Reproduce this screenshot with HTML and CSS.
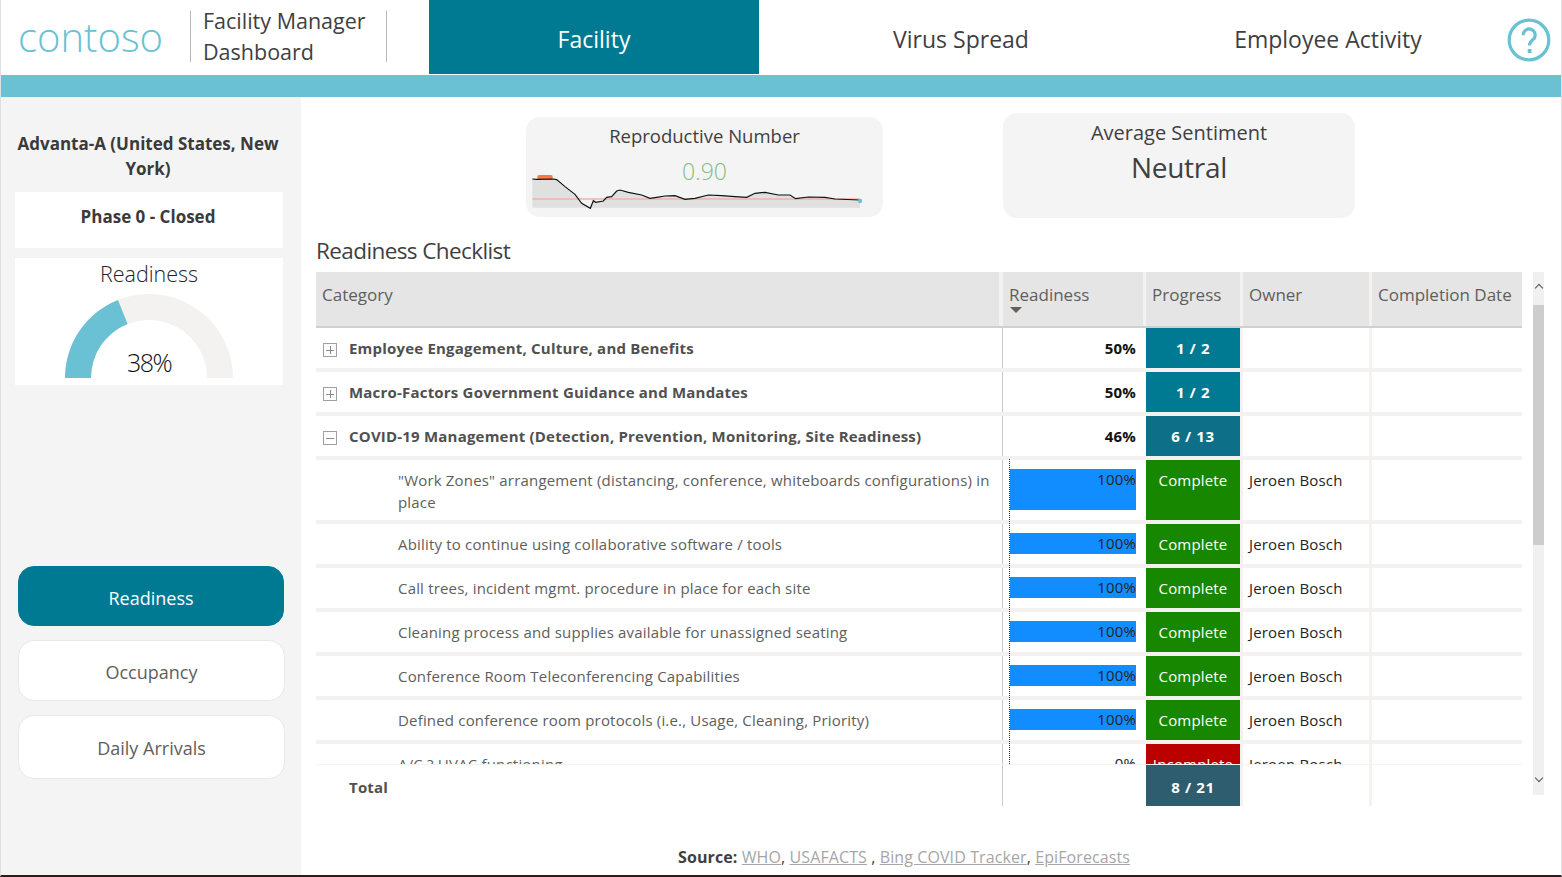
FILE: index.html
```html
<!DOCTYPE html>
<html lang="en">
<head>
    <meta charset="UTF-8">
    <meta name="viewport" content="width=device-width, initial-scale=1.0">
    <title>Facility Manager Dashboard</title>
    <link rel="stylesheet" href="styles.css">
</head>
<body>
    <div class="page">
        <header class="topbar">
            <div class="logo">contoso</div>
            <div class="app-title"><div class="app-title-text">Facility Manager Dashboard</div></div>
            <nav class="tabs">
                <a class="tab active">Facility</a>
                <a class="tab">Virus Spread</a>
                <a class="tab">Employee Activity</a>
            </nav>
            <svg class="help" viewBox="0 0 44 44" width="44" height="44">
                <circle cx="22" cy="22" r="19.8" fill="none" stroke="#6ac1d4" stroke-width="3.2"/>
                <path d="M16.2 17.2a6 6 0 1 1 9.6 4.6c-2.2 1.7-3.3 2.8-3.3 5.7" fill="none" stroke="#6ac1d4" stroke-width="3.2"/>
                <rect x="20.7" y="31" width="3.8" height="4" fill="#6ac1d4"/>
            </svg>
        </header>
        <div class="strip"></div>

        <div class="content">
            <aside class="sidebar">
                <h2 class="site-name">Advanta-A (United States, New York)</h2>
                <div class="phase-card">Phase 0 - Closed</div>
                <div class="gauge-card">
                    <div class="gauge-title">Readiness</div>
                    <svg class="gauge" viewBox="0 0 168 84" width="168" height="84">
                        <path d="M0 84a84 84 0 0 1 168 0h-26a58 58 0 0 0-116 0z" fill="#f3f2f1"/>
                        <path d="M0 84a84 84 0 0 1 53-78l9.6 24a58 58 0 0 0-36.6 54z" fill="#6ac1d4"/>
                        <text x="84" y="78" text-anchor="middle" class="gauge-value">38%</text>
                    </svg>
                </div>
                <div class="side-buttons">
                    <button class="side-btn active">Readiness</button>
                    <button class="side-btn">Occupancy</button>
                    <button class="side-btn tall">Daily Arrivals</button>
                </div>
            </aside>

            <main class="main">
                <div class="kpis">
                    <div class="kpi kpi-repro">
                        <div class="kpi-label">Reproductive Number</div>
                        <div class="kpi-number">0.90</div>
                        <svg class="spark" viewBox="18 0 1002 150" width="334" height="50">
                            <path d="M22 42L35 43L85 42L95 44L120 65L150 88L170 115L196 130L205 107L212 112L235 108L245 97L260 95L275 78L285 75L310 82L350 90L375 100L395 97L420 93L450 92L480 103L510 100L550 90L590 92L630 95L665 97L690 85L720 82L760 90L795 90L812 101L850 96L900 97L930 102L1005 105V128H22Z" fill="#e0e0e0"/>
                            <line x1="22" y1="102" x2="1005" y2="102" stroke="#efb6a2" stroke-width="5"/>
                            <rect x="37" y="30" width="46" height="14" rx="5" fill="#ff7744"/>
                            <path d="M22 42L35 43L85 42L95 44L120 65L150 88L170 115L196 130L205 107L212 112L235 108L245 97L260 95L275 78L285 75L310 82L350 90L375 100L395 97L420 93L450 92L480 103L510 100L550 90L590 92L630 95L665 97L690 85L720 82L760 90L795 90L812 101L850 96L900 97L930 102L1005 105" fill="none" stroke="#111" stroke-width="3.5"/>
                            <circle cx="1005" cy="108" r="6.5" fill="#6ac1d4"/>
                        </svg>
                    </div>
                    <div class="kpi kpi-sentiment">
                        <div class="kpi-label">Average Sentiment</div>
                        <div class="kpi-word">Neutral</div>
                    </div>
                </div>

                <h1 class="section-title">Readiness Checklist</h1>

                <div class="table-wrap">
                    <div class="table">
                        <div class="row head">
                            <div class="cell">Category</div>
                            <div class="cell readiness-head">Readiness<span class="sort-arrow"></span></div>
                            <div class="cell progress-head">Progress</div>
                            <div class="cell">Owner</div>
                            <div class="cell">Completion Date</div>
                        </div>
                        <div class="tbody">
                            <div class="row group">
                                <div class="cell cat"><span class="toggle plus"></span>Employee Engagement, Culture, and Benefits</div>
                                <div class="cell pct">50%</div>
                                <div class="cell progress teal">1 / 2</div>
                                <div class="cell owner"></div>
                                <div class="cell date"></div>
                            </div>
                            <div class="row group">
                                <div class="cell cat"><span class="toggle plus"></span>Macro-Factors Government Guidance and Mandates</div>
                                <div class="cell pct">50%</div>
                                <div class="cell progress teal">1 / 2</div>
                                <div class="cell owner"></div>
                                <div class="cell date"></div>
                            </div>
                            <div class="row group">
                                <div class="cell cat"><span class="toggle minus"></span>COVID-19 Management (Detection, Prevention, Monitoring, Site Readiness)</div>
                                <div class="cell pct">46%</div>
                                <div class="cell progress teal-dark">6 / 13</div>
                                <div class="cell owner"></div>
                                <div class="cell date"></div>
                            </div>
                            <div class="row item two-line">
                                <div class="cell sub">"Work Zones" arrangement (distancing, conference, whiteboards configurations) in place</div>
                                <div class="cell pct"><div class="bar">100%</div></div>
                                <div class="cell progress green">Complete</div>
                                <div class="cell owner">Jeroen Bosch</div>
                                <div class="cell date"></div>
                            </div>
                            <div class="row item">
                                <div class="cell sub">Ability to continue using collaborative software / tools</div>
                                <div class="cell pct"><div class="bar">100%</div></div>
                                <div class="cell progress green">Complete</div>
                                <div class="cell owner">Jeroen Bosch</div>
                                <div class="cell date"></div>
                            </div>
                            <div class="row item">
                                <div class="cell sub">Call trees, incident mgmt. procedure in place for each site</div>
                                <div class="cell pct"><div class="bar">100%</div></div>
                                <div class="cell progress green">Complete</div>
                                <div class="cell owner">Jeroen Bosch</div>
                                <div class="cell date"></div>
                            </div>
                            <div class="row item">
                                <div class="cell sub">Cleaning process and supplies available for unassigned seating</div>
                                <div class="cell pct"><div class="bar">100%</div></div>
                                <div class="cell progress green">Complete</div>
                                <div class="cell owner">Jeroen Bosch</div>
                                <div class="cell date"></div>
                            </div>
                            <div class="row item">
                                <div class="cell sub">Conference Room Teleconferencing Capabilities</div>
                                <div class="cell pct"><div class="bar">100%</div></div>
                                <div class="cell progress green">Complete</div>
                                <div class="cell owner">Jeroen Bosch</div>
                                <div class="cell date"></div>
                            </div>
                            <div class="row item">
                                <div class="cell sub">Defined conference room protocols (i.e., Usage, Cleaning, Priority)</div>
                                <div class="cell pct"><div class="bar">100%</div></div>
                                <div class="cell progress green">Complete</div>
                                <div class="cell owner">Jeroen Bosch</div>
                                <div class="cell date"></div>
                            </div>
                            <div class="row item">
                                <div class="cell sub">A/C ? HVAC functioning</div>
                                <div class="cell pct"><div class="bar empty">0%</div></div>
                                <div class="cell progress red">Incomplete</div>
                                <div class="cell owner">Jeroen Bosch</div>
                                <div class="cell date"></div>
                            </div>
                            <div class="axis-line"></div>
                        </div>
                        <div class="row total">
                            <div class="cell cat">Total</div>
                            <div class="cell pct"></div>
                            <div class="cell progress slate">8 / 21</div>
                            <div class="cell owner"></div>
                            <div class="cell date"></div>
                        </div>
                    </div>
                    <div class="scrollbar">
                        <span class="scroll-arrow up"></span>
                        <span class="scroll-thumb"></span>
                        <span class="scroll-arrow down"></span>
                    </div>
                </div>

                <p class="source"><b>Source:</b> <a>WHO</a>, <a>USAFACTS</a> , <a>Bing COVID Tracker</a>, <a>EpiForecasts</a></p>
            </main>
        </div>
    </div>
</body>
</html>
```

FILE: styles.css
```css
* {
    box-sizing: border-box;
}

body {
    margin: 0;
    background-color: white;
    font-family: "Open Sans", "Noto Sans", sans-serif;
    color: #252423;
}

.page {
    height: 877px;
    overflow: hidden;
    display: flex;
    flex-direction: column;
    border-left: 1px solid #e0e0e0;
    border-right: 1px solid #e0e0e0;
    border-bottom: 2px solid #2d1c1c;
}


/* top bar */
.topbar {
    display: flex;
    height: 75px;
    flex: none;
}

.logo {
    width: 189px;
    padding: 10px 0 0 17px;
    font-size: 40px;
    font-weight: 300;
    line-height: 54px;
    color: #6ac1d4;
}

.app-title {
    width: 197px;
    height: 51px;
    margin-top: 11px;
    padding: 0 10px 0 12px;
    border-left: 1px solid #b8b8b8;
    border-right: 1px solid #b8b8b8;
}

.app-title-text {
    margin-top: -6px;
    font-size: 21.5px;
    line-height: 31px;
    color: #3f3f3f;
}

.tabs {
    display: flex;
    gap: 37px;
    margin-left: 42px;
}

.tab {
    width: 330px;
    height: 74px;
    padding-top: 4px;
    display: flex;
    align-items: center;
    justify-content: center;
    font-size: 23px;
    color: #3f3f3f;
}

.tab.active {
    background-color: #007a93;
    color: white;
}

.help {
    margin: 18px 0 0 14px;
}

.strip {
    height: 22px;
    flex: none;
    background-color: #6ac1d4;
}

.content {
    flex: 1;
    display: flex;
    min-height: 0;
}


/* left column */
.sidebar {
    width: 300px;
    flex: none;
    padding-top: 34px;
    background-color: #f4f4f4;
}

.site-name {
    margin: 0 20px 11px 14px;
    font-size: 17px;
    font-weight: 700;
    line-height: 25px;
    text-align: center;
    color: #3a3a3a;
}

.phase-card {
    height: 56px;
    margin: 0 18px 10px 14px;
    padding: 13px 2px 0 0;
    background-color: white;
    font-size: 17px;
    font-weight: 700;
    text-align: center;
    color: #3a3a3a;
}

.gauge-card {
    height: 127px;
    margin: 0 18px 0 14px;
    background-color: white;
    text-align: center;
}

.gauge-title {
    height: 36px;
    font-size: 21.5px;
    font-weight: 300;
    line-height: 32px;
    color: #252423;
}

.gauge {
    display: block;
    margin: 0 auto;
}

.gauge-value {
    font-size: 25px;
    font-weight: 300;
    letter-spacing: -1.5px;
    fill: #111;
}

.side-buttons {
    display: flex;
    flex-direction: column;
    gap: 14px;
    margin: 181px 16px 0 17px;
}

.side-btn {
    height: 61px;
    padding: 2px 0 0;
    background-color: white;
    border: 1px solid #e8e8e8;
    border-radius: 16px;
    font-family: inherit;
    font-size: 18px;
    color: #605e5c;
}

.side-btn.active {
    height: 60px;
    margin-right: 1px;
    padding-top: 4px;
    background-color: #007a93;
    border-color: #007a93;
    color: white;
}

.side-btn.tall {
    height: 64px;
}


/* main column */
.main {
    flex: 1;
    min-width: 0;
    padding: 16px 0 0 15px;
}

.kpis {
    display: flex;
    height: 105px;
}

.kpi {
    background-color: #f4f4f4;
    border-radius: 14px;
    text-align: center;
    color: #3f3f3f;
}

.kpi-repro {
    width: 357px;
    height: 100px;
    margin: 4px 0 0 210px;
    padding: 6px 0 0;
}

.kpi-sentiment {
    width: 352px;
    height: 105px;
    margin-left: 120px;
    padding-top: 7px;
}

.kpi-label {
    font-size: 18.5px;
    line-height: 26px;
}

.kpi-sentiment .kpi-label {
    font-size: 20px;
}

.kpi-number {
    height: 11px;
    margin-top: 5px;
    font-size: 23px;
    font-weight: 300;
    line-height: 34px;
    color: #7fbf7f;
    position: relative;
}

.spark {
    display: block;
    margin-left: 5px;
}

.kpi-word {
    margin-top: 2px;
    font-size: 28px;
    line-height: 38px;
    letter-spacing: -0.3px;
}

.section-title {
    margin: 18px 0 0;
    height: 36px;
    font-size: 22.5px;
    font-weight: 400;
    line-height: 30px;
    letter-spacing: -0.6px;
    color: #3f3f3f;
}


/* checklist table */
.table-wrap {
    display: flex;
}

.table {
    width: 1206px;
    flex: none;
}

.row {
    display: grid;
    grid-template-columns: 686px 144px 94px 129px 153px;
    font-size: 15px;
    line-height: 22px;
    letter-spacing: 0.18px;
}

.row.head {
    height: 56px;
    background-color: #e5e5e5;
    border-bottom: 2px solid #cfcfcf;
    font-size: 17px;
    letter-spacing: 0;
    color: #605e5c;
}

.head .cell {
    padding: 12px 0 0 6px;
    border-left: 3px solid #f3f2f1;
}

.head .cell:first-child {
    border-left: 0;
}

.head .readiness-head {
    margin-left: -3px;
    border-left-width: 4px;
}

.head .progress-head {
    margin-left: -3px;
}

.sort-arrow {
    display: block;
    width: 0;
    height: 0;
    margin: 1px 0 0 1px;
    border-left: 6px solid transparent;
    border-right: 6px solid transparent;
    border-top: 6px solid #605e5c;
}

.tbody {
    height: 437px;
    overflow: hidden;
    position: relative;
    border-bottom: 1px solid #f3f2f1;
}

.tbody .row {
    height: 44px;
    border-bottom: 4px solid #f3f2f1;
}

.tbody .row.two-line {
    height: 64px;
}

.cell {
    min-width: 0;
}

.cat {
    padding: 9px 0 0 33px;
    position: relative;
}

.group .cat,
.total .cat {
    font-weight: 700;
    letter-spacing: 0.2px;
    color: #505050;
}

.toggle {
    position: absolute;
    left: 7px;
    top: 15px;
    width: 14px;
    height: 14px;
    border: 1px solid #a0a0a0;
}

.toggle::before,
.toggle.plus::after {
    content: "";
    position: absolute;
    background-color: #8a8a8a;
}

.toggle::before {
    left: 2px;
    right: 2px;
    top: 5.5px;
    height: 1px;
}

.toggle.plus::after {
    top: 2px;
    bottom: 2px;
    left: 5.5px;
    width: 1px;
}

.sub {
    padding: 9px 6px 0 82px;
    color: #605e5c;
}

.pct {
    padding: 9px 7px 0 7px;
    border-left: 1px solid #c8c8c8;
    border-right: 3px solid white;
    text-align: right;
    font-weight: 700;
    color: #111;
}

.item .pct {
    font-weight: 400;
    color: #252423;
}

.bar {
    height: 21px;
    background-color: #118dff;
    line-height: 21px;
}

.two-line .bar {
    height: 41px;
}

.bar.empty {
    background-color: transparent;
}

.axis-line {
    position: absolute;
    left: 693px;
    top: 131px;
    bottom: 0;
    border-left: 1px dotted #333;
}

.progress {
    padding-top: 9px;
    text-align: center;
    color: white;
}

.teal {
    background-color: #007a93;
}

.teal-dark {
    background-color: #0d6f88;
}

.slate {
    background-color: #2e5d70;
}

.green {
    background-color: #178700;
}

.red {
    background-color: #bb0000;
}

.group .progress,
.total .progress {
    font-weight: 700;
    letter-spacing: 0.6px;
}

.owner {
    padding: 9px 0 0 6px;
    border-left: 3px solid #f3f2f1;
}

.date {
    border-left: 3px solid #f3f2f1;
}

.row.total {
    height: 41px;
}

.total .cat {
    padding-top: 11px;
}

.total .pct {
    border-right: 0;
}

.total .progress {
    padding-top: 11px;
}

.scrollbar {
    width: 11px;
    height: 523px;
    margin-left: 11px;
    position: relative;
    background-color: #f0f0f0;
}

.scroll-thumb {
    position: absolute;
    left: 0;
    right: 0;
    top: 33px;
    height: 240px;
    background-color: #cdcdcd;
}

.scroll-arrow {
    position: absolute;
    left: 3px;
    width: 6px;
    height: 6px;
    border-left: 1px solid #555;
    border-top: 1px solid #555;
}

.scroll-arrow.up {
    top: 13px;
    transform: rotate(45deg);
}

.scroll-arrow.down {
    bottom: 14px;
    transform: rotate(225deg);
}

.source {
    margin: 39px 0 0 362px;
    font-size: 16px;
    line-height: 24px;
    letter-spacing: 0.1px;
    color: #3f3f3f;
}

.source b {
    font-weight: 700;
}

.source a {
    color: #a6a6a6;
    text-decoration: underline;
}
```
